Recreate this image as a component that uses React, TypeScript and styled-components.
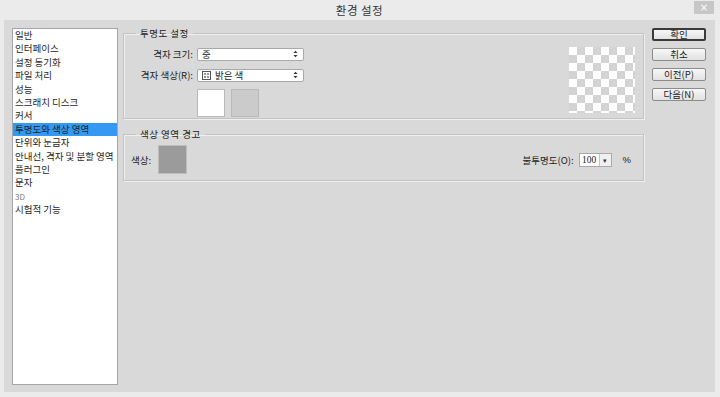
import styled, { createGlobalStyle } from 'styled-components';

const GlobalStyle = createGlobalStyle`
  html, body {
    margin: 0;
    padding: 0;
    background: #ebebeb;
  }
  body {
    font-family: "Noto Sans CJK KR", "Noto Sans", sans-serif;
    color: #222;
  }
`;

const categories = [
  '일반',
  '인터페이스',
  '설정 동기화',
  '파일 처리',
  '성능',
  '스크래치 디스크',
  '커서',
  '투명도와 색상 영역',
  '단위와 눈금자',
  '안내선, 격자 및 분할 영역',
  '플러그인',
  '문자',
  '3D',
  '시험적 기능',
];

const buttons = ['확인', '취소', '이전(P)', '다음(N)'];

function UpDown() {
  return (
    <svg width="5" height="8" viewBox="0 0 5 8">
      <path d="M0.5 3 L2.5 0.8 L4.5 3 Z" fill="#333" />
      <path d="M0.5 5 L2.5 7.2 L4.5 5 Z" fill="#333" />
    </svg>
  );
}

function CheckerIcon() {
  return (
    <svg width="9" height="9" viewBox="0 0 9 9">
      <rect x="0.5" y="0.5" width="8" height="8" fill="#fff" stroke="#555" />
      <rect x="2" y="2" width="2" height="2" fill="#999" />
      <rect x="5" y="2" width="2" height="2" fill="#999" />
      <rect x="2" y="5" width="2" height="2" fill="#999" />
      <rect x="5" y="5" width="2" height="2" fill="#999" />
    </svg>
  );
}

export default function App() {
  return (
    <>
      <GlobalStyle />
      <Window>
        <TitleBar>
          <Title>환경 설정</Title>
          <CloseButton>×</CloseButton>
        </TitleBar>
        <Body>
          <CategoryList>
            {categories.map((name, i) => (
              <CategoryItem key={name} selected={i === 7} disabled={name === '3D'}>
                {name}
              </CategoryItem>
            ))}
          </CategoryList>

          <Content>
            <GroupBox>
              <Legend>투명도 설정</Legend>
              <GroupInner>
                <FormGrid>
                  <FieldLabel>격자 크기:</FieldLabel>
                  <Select>
                    <span>중</span>
                    <UpDown />
                  </Select>
                  <FieldLabel>격자 색상(R):</FieldLabel>
                  <Select>
                    <SelectValue>
                      <CheckerIcon />
                      밝은 색
                    </SelectValue>
                    <UpDown />
                  </Select>
                  <span />
                  <Swatches>
                    <Swatch color="#ffffff" />
                    <Swatch color="#cbcbcb" />
                  </Swatches>
                </FormGrid>
                <Checker />
              </GroupInner>
            </GroupBox>

            <GroupBox>
              <Legend>색상 영역 경고</Legend>
              <WarningRow>
                <ColorField>
                  <FieldLabel>색상:</FieldLabel>
                  <BigSwatch />
                </ColorField>
                <OpacityField>
                  <FieldLabel>불투명도(O):</FieldLabel>
                  <NumberBox>
                    <NumberInput>100</NumberInput>
                    <NumberArrow>▾</NumberArrow>
                  </NumberBox>
                  <Percent>%</Percent>
                </OpacityField>
              </WarningRow>
            </GroupBox>
          </Content>

          <ButtonColumn>
            {buttons.map((label, i) => (
              <DialogButton key={label} primary={i === 0}>
                {label}
              </DialogButton>
            ))}
          </ButtonColumn>
        </Body>
      </Window>
    </>
  );
}

const Window = styled.div`
  width: 720px;
  height: 397px;
  display: flex;
  flex-direction: column;
  background: #ebebeb;
  padding: 0 5px 5px 4px;
  box-sizing: border-box;
`;

const TitleBar = styled.div`
  height: 20px;
  display: flex;
  align-items: center;
  justify-content: center;
  position: relative;
`;

const Title = styled.div`
  font-size: 11.5px;
  color: #333;
  letter-spacing: 0.5px;
`;

const CloseButton = styled.div`
  position: absolute;
  right: 1px;
  top: 1px;
  width: 20px;
  height: 13px;
  background: #c7c7c7;
  color: #fff;
  font-family: "DejaVu Sans", sans-serif;
  font-size: 10px;
  line-height: 13px;
  text-align: center;
`;

const Body = styled.div`
  flex: 1;
  display: flex;
  background: #d9d9d9;
  padding: 8px 9px 7px 8px;
  box-sizing: border-box;
`;

const CategoryList = styled.div`
  width: 106px;
  background: #fff;
  border: 1px solid #a6a6a6;
  box-sizing: border-box;
  display: flex;
  flex-direction: column;
`;

const CategoryItem = styled.div<{ selected: boolean; disabled: boolean }>`
  height: 13.4px;
  line-height: 13.4px;
  padding-left: 2px;
  white-space: nowrap;
  background: ${p => (p.selected ? '#3399f3' : 'transparent')};
  color: ${p => (p.disabled ? '#777' : '#1e1e1e')};
  font-size: ${p => (p.disabled ? '8px' : '9.5px')};
`;

const Content = styled.div`
  width: 521px;
  margin-left: 5px;
  display: flex;
  flex-direction: column;
  gap: 10px;
`;

const GroupBox = styled.fieldset`
  margin: 0;
  padding: 0;
  border: 1px solid #c3c3c3;
  box-shadow: inset 1px 1px 0 #efefef, 1px 1px 0 #efefef;
  min-width: 0;
`;

const Legend = styled.legend`
  margin-left: 12px;
  padding: 0 4px;
  font-size: 9.5px;
  line-height: 10px;
  color: #222;
  letter-spacing: 0.5px;
`;

const GroupInner = styled.div`
  display: flex;
  justify-content: space-between;
  padding: 9px 8px 5px 0;
  height: 66px;
`;

const FormGrid = styled.div`
  display: grid;
  grid-template-columns: 69px 107px;
  column-gap: 4px;
  row-gap: 7px;
  align-items: center;
  align-content: start;
`;

const FieldLabel = styled.span`
  font-size: 9.5px;
  text-align: right;
  white-space: nowrap;
  color: #222;
`;

const Select = styled.div`
  height: 13px;
  background: #fff;
  border: 1px solid #a9a9a9;
  border-radius: 2px;
  box-sizing: border-box;
  display: flex;
  align-items: center;
  justify-content: space-between;
  padding: 0 5px 0 4px;
  font-size: 9.5px;
`;

const SelectValue = styled.span`
  display: flex;
  align-items: center;
  gap: 4px;
`;

const Swatches = styled.div`
  display: flex;
  gap: 6px;
`;

const Swatch = styled.div<{ color: string }>`
  width: 28px;
  height: 28px;
  background: ${p => p.color};
  border: 1px solid #b9b9b9;
  box-sizing: border-box;
`;

const Checker = styled.div`
  width: 66px;
  height: 66px;
  background-color: #fff;
  background-image:
    linear-gradient(45deg, #d3d3d3 25%, transparent 25%, transparent 75%, #d3d3d3 75%),
    linear-gradient(45deg, #d3d3d3 25%, transparent 25%, transparent 75%, #d3d3d3 75%);
  background-size: 16px 16px;
  background-position: 0 0, 8px 8px;
`;

const WarningRow = styled.div`
  display: flex;
  align-items: center;
  justify-content: space-between;
  padding: 6px 12px 6px 7px;
`;

const ColorField = styled.div`
  display: flex;
  align-items: center;
  gap: 7px;
`;

const BigSwatch = styled.div`
  width: 29px;
  height: 29px;
  background: #9b9b9b;
  border: 1px solid #bdbdbd;
  box-sizing: border-box;
`;

const OpacityField = styled.div`
  display: flex;
  align-items: center;
`;

const NumberBox = styled.div`
  display: flex;
  height: 14px;
  margin-left: 5px;
  border: 1px solid #a9a9a9;
  box-sizing: border-box;
  background: #fff;
`;

const NumberInput = styled.span`
  width: 19px;
  font-family: "Liberation Serif", serif;
  font-size: 9.5px;
  line-height: 12px;
  text-align: center;
`;

const NumberArrow = styled.span`
  width: 11px;
  border-left: 1px solid #c4c4c4;
  background: #f0f0f0;
  font-size: 7px;
  line-height: 12px;
  text-align: center;
  color: #333;
`;

const Percent = styled.span`
  margin-left: 11px;
  font-family: "Liberation Sans", sans-serif;
  font-size: 9.5px;
`;

const ButtonColumn = styled.div`
  margin-left: 8px;
  width: 54px;
  display: flex;
  flex-direction: column;
  gap: 7px;
`;

const DialogButton = styled.div<{ primary: boolean }>`
  height: 13px;
  box-sizing: border-box;
  border: ${p => (p.primary ? '2px solid #3a3a3a' : '1px solid #8c8c8c')};
  border-radius: 2px;
  background: linear-gradient(#f7f7f7, #e2e2e2);
  font-size: 9.5px;
  line-height: ${p => (p.primary ? '9px' : '11px')};
  text-align: center;
  color: #222;
`;
